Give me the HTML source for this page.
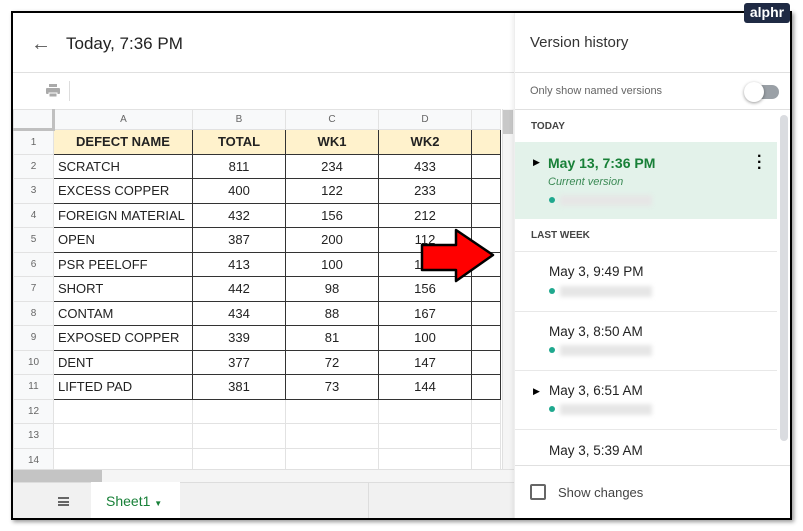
<!DOCTYPE html>
<html><head><style>
*{margin:0;padding:0;box-sizing:border-box}
body{width:803px;height:531px;background:#fff;font-family:"Liberation Sans",Arial,sans-serif;position:relative;overflow:hidden}
.a{position:absolute}
.frame{left:11px;top:11px;width:781px;height:509px;border:2px solid #000;box-shadow:2px 2px 4px #999;overflow:hidden;background:#fff}
table{border-collapse:collapse;position:absolute;left:0;top:96px;font-size:13px;color:#222}
td{height:24.5px;border:1px solid #e2e2e2;padding:0 4px;white-space:nowrap}
td.h{background:#f8f9fa;color:#666;font-size:10px;text-align:center;width:40px}
tr.ch td{background:#f8f9fa;color:#666;font-size:10px;text-align:center;height:20px}
.d td.c{border:1px solid #333}
.n{text-align:center}
.y td.c{background:#fff2cc;font-weight:bold;text-align:center}
.it{position:absolute;left:0;width:262px;font-size:13.5px;color:#222}
.dot{position:absolute;width:6px;height:6px;border-radius:50%;background:#1fa88e}
.blur{position:absolute;height:11px;width:92px;background:#e6e6e6;filter:blur(2px)}
</style></head><body>
<div class="a" style="left:744px;top:3px;width:46px;height:20px;background:#1f2a44;border-radius:3px;color:#fff;font-size:14px;font-weight:bold;text-align:center;line-height:19px;z-index:5">alphr</div>
<div class="a frame">
 <div class="a" style="left:18px;top:20px;font-size:20px;color:#555">&#8592;</div>
 <div class="a" style="left:53px;top:21px;font-size:17px;color:#222">Today, 7:36 PM</div>
 <div class="a" style="left:0;top:59px;width:501px;border-top:1px solid #e0e0e0"></div>
 <svg class="a" style="left:32px;top:71px" width="16" height="14"><rect x="4" y="0" width="8" height="3" fill="#aaa"/><rect x="1" y="4" width="14" height="6" rx="1" fill="#aaa"/><rect x="4" y="9" width="8" height="4" fill="#aaa" stroke="#fff" stroke-width="1"/></svg>
 <div class="a" style="left:56px;top:68px;height:20px;border-left:1px solid #ddd"></div>
 <table>
  <tr class="ch"><td style="width:40px;border-right:3px solid #c0c0c0;border-bottom:3px solid #c0c0c0"></td><td style="width:139px">A</td><td style="width:93px">B</td><td style="width:93px">C</td><td style="width:93px">D</td><td style="width:29px"></td></tr>
  <tr class="d y"><td class="h">1</td><td class="c">DEFECT NAME</td><td class="c">TOTAL</td><td class="c">WK1</td><td class="c">WK2</td><td class="c"></td></tr>
  <tr class="d"><td class="h">2</td><td class="c">SCRATCH</td><td class="c n">811</td><td class="c n">234</td><td class="c n">433</td><td class="c"></td></tr>
  <tr class="d"><td class="h">3</td><td class="c">EXCESS COPPER</td><td class="c n">400</td><td class="c n">122</td><td class="c n">233</td><td class="c"></td></tr>
  <tr class="d"><td class="h">4</td><td class="c">FOREIGN MATERIAL</td><td class="c n">432</td><td class="c n">156</td><td class="c n">212</td><td class="c"></td></tr>
  <tr class="d"><td class="h">5</td><td class="c">OPEN</td><td class="c n">387</td><td class="c n">200</td><td class="c n">112</td><td class="c"></td></tr>
  <tr class="d"><td class="h">6</td><td class="c">PSR PEELOFF</td><td class="c n">413</td><td class="c n">100</td><td class="c n">145</td><td class="c"></td></tr>
  <tr class="d"><td class="h">7</td><td class="c">SHORT</td><td class="c n">442</td><td class="c n">98</td><td class="c n">156</td><td class="c"></td></tr>
  <tr class="d"><td class="h">8</td><td class="c">CONTAM</td><td class="c n">434</td><td class="c n">88</td><td class="c n">167</td><td class="c"></td></tr>
  <tr class="d"><td class="h">9</td><td class="c">EXPOSED COPPER</td><td class="c n">339</td><td class="c n">81</td><td class="c n">100</td><td class="c"></td></tr>
  <tr class="d"><td class="h">10</td><td class="c">DENT</td><td class="c n">377</td><td class="c n">72</td><td class="c n">147</td><td class="c"></td></tr>
  <tr class="d"><td class="h">11</td><td class="c">LIFTED PAD</td><td class="c n">381</td><td class="c n">73</td><td class="c n">144</td><td class="c"></td></tr>
  <tr><td class="h">12</td><td></td><td></td><td></td><td></td><td></td></tr>
  <tr><td class="h">13</td><td></td><td></td><td></td><td></td><td></td></tr>
  <tr><td class="h">14</td><td></td><td></td><td></td><td></td><td></td></tr>
 </table>
 <div class="a" style="left:489px;top:96px;width:12px;height:360px;background:#f5f5f5;border-left:1px solid #e0e0e0"></div>
 <div class="a" style="left:490px;top:97px;width:10px;height:24px;background:#c8c8c8"></div>
 <div class="a" style="left:0;top:456px;width:501px;height:13px;background:#f5f5f5;border-top:1px solid #e0e0e0"></div>
 <div class="a" style="left:0;top:457px;width:89px;height:12px;background:#c4c4c4"></div>
 <div class="a" style="left:0;top:469px;width:501px;height:40px;background:#f1f1f1;border-top:1px solid #ddd"></div>
 <div class="a" style="left:45px;top:484px;width:11px;height:9px;border-top:2px solid #666;border-bottom:2px solid #666"></div>
 <div class="a" style="left:45px;top:487.5px;width:11px;height:2px;background:#666"></div>
 <div class="a" style="left:78px;top:469px;width:89px;height:40px;background:#fff;color:#188038;font-size:14px;padding:11px 0 0 15px">Sheet1 <span style="font-size:8px">&#9660;</span></div>
 <div class="a" style="left:355px;top:470px;height:38px;border-left:1px solid #ddd"></div>
 <svg class="a" style="left:400px;top:205px" width="95" height="80"><polygon points="9,27 43,27 43,12 80,37 43,63 43,52 9,52" fill="#f00" stroke="#000" stroke-width="2.5" stroke-linejoin="round"/></svg>
 <div class="a" style="left:501px;top:0;width:278px;height:509px;background:#fff;border-left:1px solid #eee;box-shadow:-2px 0 4px rgba(0,0,0,.06)">
  <div class="a" style="left:15px;top:21px;font-size:15px;color:#333">Version history</div>
  <div class="a" style="left:0;top:59px;width:278px;border-top:1px solid #e0e0e0"></div>
  <div class="a" style="left:15px;top:72px;font-size:11px;color:#666">Only show named versions</div>
  <div class="a" style="left:236px;top:72px;width:28px;height:14px;border-radius:7px;background:#9aa0a6"></div>
  <div class="a" style="left:229px;top:69px;width:20px;height:20px;border-radius:50%;background:#fff;box-shadow:0 1px 3px rgba(0,0,0,.4)"></div>
  <div class="a" style="left:0;top:96px;width:278px;border-top:1px solid #e0e0e0"></div>
  <div class="a" style="left:265px;top:102px;width:8px;height:326px;border-radius:4px;background:#dadce0"></div>
  <div class="a" style="left:16px;top:108px;font-size:10px;font-weight:bold;color:#444">TODAY</div>
  <div class="a" style="left:0;top:129px;width:262px;height:77px;background:#e3f2ea"></div>
  <div class="a" style="left:18px;top:144px;font-size:9px">&#9654;</div>
  <div class="a" style="left:33px;top:142px;font-size:14px;font-weight:bold;color:#188038">May 13, 7:36 PM</div>
  <div class="a" style="left:242px;top:141px;font-size:16px;font-weight:bold;line-height:6px">·<br>·<br>·</div>
  <div class="a" style="left:33px;top:163px;font-size:11px;font-style:italic;color:#3b8a55">Current version</div>
  <div class="dot" style="left:34px;top:184px"></div><div class="blur" style="left:45px;top:182px"></div>
  <div class="a" style="left:16px;top:217px;font-size:10px;font-weight:bold;color:#444">LAST WEEK</div>
  <div class="a" style="left:0;top:238px;width:262px;border-top:1px solid #e8e8e8"></div>
  <div class="it" style="top:251px;left:34px">May 3, 9:49 PM</div>
  <div class="dot" style="left:34px;top:275px"></div><div class="blur" style="left:45px;top:273px"></div>
  <div class="a" style="left:0;top:298px;width:262px;border-top:1px solid #e8e8e8"></div>
  <div class="it" style="top:311px;left:34px">May 3, 8:50 AM</div>
  <div class="dot" style="left:34px;top:334px"></div><div class="blur" style="left:45px;top:332px"></div>
  <div class="a" style="left:0;top:357px;width:262px;border-top:1px solid #e8e8e8"></div>
  <div class="a" style="left:18px;top:373px;font-size:9px">&#9654;</div>
  <div class="it" style="top:370px;left:34px">May 3, 6:51 AM</div>
  <div class="dot" style="left:34px;top:393px"></div><div class="blur" style="left:45px;top:391px"></div>
  <div class="a" style="left:0;top:416px;width:262px;border-top:1px solid #e8e8e8"></div>
  <div class="it" style="top:430px;left:34px">May 3, 5:39 AM</div>
  <div class="a" style="left:0;top:452px;width:278px;height:57px;background:#fff;border-top:1px solid #e0e0e0"></div>
  <div class="a" style="left:15px;top:471px;width:16px;height:16px;border:2px solid #666;border-radius:2px"></div>
  <div class="a" style="left:43px;top:472px;font-size:13px;color:#444">Show changes</div>
 </div>
</div>
</body></html>
